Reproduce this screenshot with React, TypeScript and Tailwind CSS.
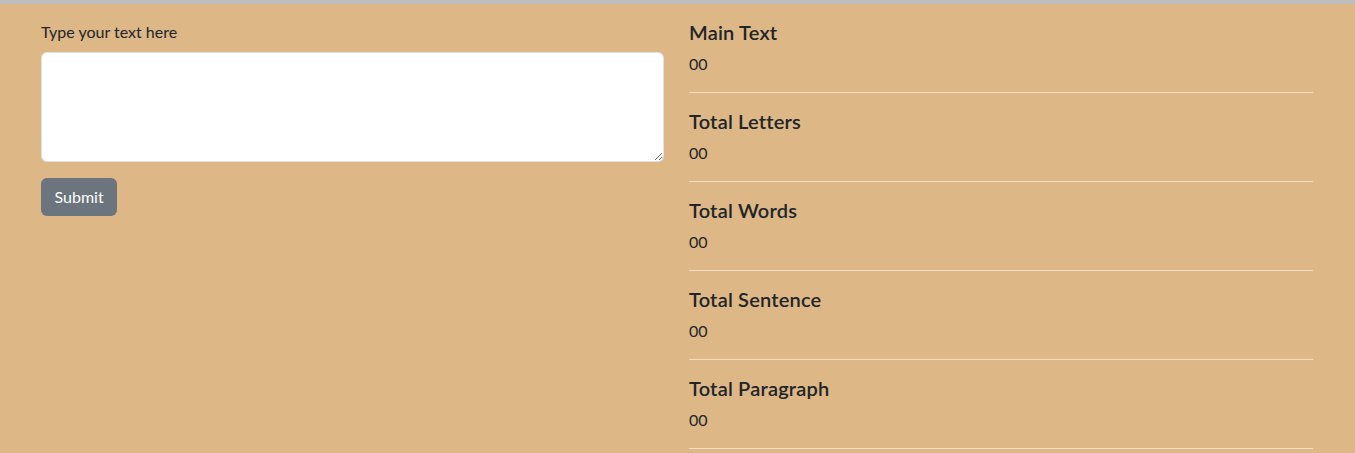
import React from "react";

const stats = [
  "Main Text",
  "Total Letters",
  "Total Words",
  "Total Sentence",
  "Total Paragraph",
];

export default function App() {
  return (
    <div className="min-h-[453px] w-full bg-[#ddb785] text-[#212529] font-['Lato','Liberation_Sans',sans-serif] text-base">
      <div className="h-1 w-full bg-[#bebebe]" />
      <div className="flex gap-[25px] pl-[41px] pt-4">
        <div className="w-[623px] flex flex-col items-start">
          <label className="leading-6 mb-2">Type your text here</label>
          <textarea
            rows={4}
            className="w-full h-[110px] bg-white border border-[#dee2e6] rounded-md px-3 py-1.5 resize-y outline-none"
          />
          <button className="mt-4 h-[38px] px-[13.5px] rounded-md bg-[#6c757d] text-white leading-6">
            Submit
          </button>
        </div>
        <div className="w-[624px]">
          {stats.map((s) => (
            <div key={s}>
              <h5 className="text-xl font-semibold leading-6 mb-2 tracking-[0.01em]">{s}</h5>
              <p className="leading-6 mb-4">00</p>
              <hr className="border-t border-[#f0dfc6] mb-4" />
            </div>
          ))}
        </div>
      </div>
    </div>
  );
}
